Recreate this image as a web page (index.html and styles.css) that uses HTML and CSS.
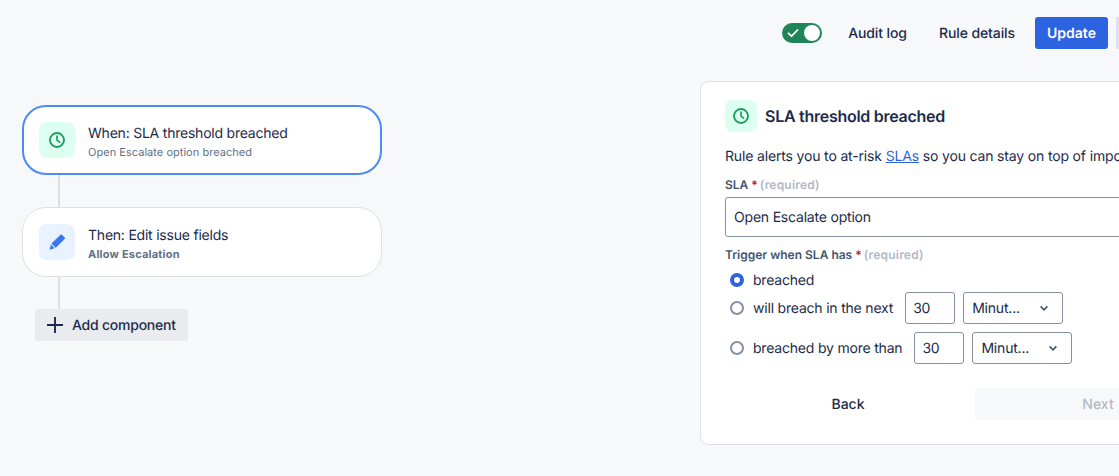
FILE: index.html
```html
<!DOCTYPE html>
<html lang="en">
<head>
<meta charset="utf-8">
<title>SLA threshold breached</title>
<link rel="stylesheet" href="styles.css">
</head>
<body>
<div class="page">
  <header class="topbar">
    <span class="toggle">
      <svg class="toggle-check" width="14" height="14" viewBox="0 0 14 14"><path d="M2.5 7.3 5.6 10.2 11.5 4" fill="none" stroke="#fff" stroke-width="1.8" stroke-linecap="round" stroke-linejoin="round"/></svg>
      <span class="toggle-knob"></span>
    </span>
    <a class="top-link link-audit">Audit log</a>
    <a class="top-link link-details">Rule details</a>
    <button class="btn-update">Update</button>
    <span class="top-sep"></span>
  </header>
  <main class="main">
    <section class="flow">
      <div class="node node-active">
        <span class="icon-box icon-green">
          <svg width="18" height="18" viewBox="0 0 18 18"><circle cx="9" cy="9" r="7" fill="none" stroke="#1f9d63" stroke-width="1.9"/><path d="M9 5v4.2l2.6 2" fill="none" stroke="#1f9d63" stroke-width="1.7" stroke-linecap="round" stroke-linejoin="round"/></svg>
        </span>
        <div class="node-text">
          <div class="node-title">When: SLA threshold breached</div>
          <div class="node-sub">Open Escalate option breached</div>
        </div>
      </div>
      <div class="connector"></div>
      <div class="node">
        <span class="icon-box icon-blue">
          <svg width="18" height="18" viewBox="0 0 18 18"><path d="M13.2 1.6 17 5.2 7.8 14.4 3.8 10.6Z" fill="#3b76f0" stroke="#3b76f0" stroke-width="0.8" stroke-linejoin="round"/><path d="M2.9 11.6 6.6 15.2 1.6 16.8Z" fill="#3b76f0"/></svg>
        </span>
        <div class="node-text">
          <div class="node-title">Then: Edit issue fields</div>
          <div class="node-sub node-sub-bold">Allow Escalation</div>
        </div>
      </div>
      <div class="connector"></div>
      <button class="btn-add">
        <svg width="18" height="18" viewBox="0 0 18 18"><path d="M9 1v16M1 9h16" stroke="#1c2b4a" stroke-width="1.9" fill="none"/></svg>
        <span>Add component</span>
      </button>
    </section>
    <section class="panel">
      <div class="panel-head">
        <span class="icon-box icon-green icon-small">
          <svg width="18" height="18" viewBox="0 0 18 18"><circle cx="9" cy="9" r="7" fill="none" stroke="#1f9d63" stroke-width="1.9"/><path d="M9 5v4.2l2.6 2" fill="none" stroke="#1f9d63" stroke-width="1.7" stroke-linecap="round" stroke-linejoin="round"/></svg>
        </span>
        <h2 class="panel-title">SLA threshold breached</h2>
      </div>
      <p class="panel-desc">Rule alerts you to at-risk <a class="desc-link">SLAs</a> so you can stay on top of important issues and escalate them.</p>
      <div class="field-label">SLA<span class="req">*</span> <span class="req-note">(required)</span></div>
      <div class="text-input">Open Escalate option</div>
      <div class="field-label label-trigger">Trigger when SLA has<span class="req">*</span> <span class="req-note">(required)</span></div>
      <div class="radio-row row-first">
        <span class="radio radio-on"></span>
        <span class="radio-label">breached</span>
      </div>
      <div class="radio-row row-second">
        <span class="radio"></span>
        <span class="radio-label">will breach in the next</span>
        <span class="num-input">30</span>
        <span class="select">Minut...<svg width="10" height="10" viewBox="0 0 10 10"><path d="M1.6 3.4 5 6.8 8.4 3.4" fill="none" stroke="#44516b" stroke-width="1.6"/></svg></span>
      </div>
      <div class="radio-row row-third">
        <span class="radio"></span>
        <span class="radio-label">breached by more than</span>
        <span class="num-input">30</span>
        <span class="select">Minut...<svg width="10" height="10" viewBox="0 0 10 10"><path d="M1.6 3.4 5 6.8 8.4 3.4" fill="none" stroke="#44516b" stroke-width="1.6"/></svg></span>
      </div>
      <div class="panel-actions">
        <button class="btn-back">Back</button>
        <button class="btn-next">Next</button>
      </div>
    </section>
  </main>
</div>
</body>
</html>
```
FILE: styles.css
```css
* { box-sizing: border-box; }
html, body { margin: 0; height: 100%; overflow: hidden; }
body {
  background: #f7f8fa;
  font-family: Inter, "Liberation Sans", sans-serif;
  color: #1c2b4a;
  font-size: 14px;
  letter-spacing: -0.2px;
  text-rendering: geometricPrecision;
}
.page { width: 1119px; height: 476px; overflow: hidden; }

.topbar {
  height: 81px;
  padding-top: 17px;
  display: flex;
  align-items: flex-start;
  justify-content: flex-end;
}
.toggle {
  width: 40px;
  height: 20px;
  margin-top: 6px;
  margin-right: 26px;
  padding: 2px;
  border-radius: 10px;
  background: #1f845a;
  display: flex;
  align-items: center;
  justify-content: space-between;
}
.toggle-check { margin-left: 2px; }
.toggle-knob { width: 16px; height: 16px; border-radius: 50%; background: #fff; }
.top-link { line-height: 33px; font-weight: 500; font-size: 14px; letter-spacing: -0.1px; }
.link-audit { margin-right: 32px; }
.link-details { margin-right: 20px; }
.btn-update {
  width: 73px;
  height: 32px;
  padding: 1px 0 0;
  border: 0;
  border-radius: 3px;
  background: #2d62e0;
  color: #fff;
  font: 600 14px Inter, "Liberation Sans", sans-serif;
  text-rendering: geometricPrecision;
  margin-right: 8px;
}
.top-sep { width: 3px; height: 32px; background: #dfe1e6; }

.main { display: flex; align-items: flex-start; }
.flow {
  flex: none;
  width: 700px;
  padding: 24px 0 0 22px;
  display: flex;
  flex-direction: column;
  align-items: flex-start;
}
.node {
  width: 360px;
  height: 70px;
  padding: 0 16px;
  background: #fff;
  border: 1px solid #dfe1e6;
  border-radius: 24px;
  display: flex;
  align-items: center;
  gap: 13px;
}
.node-active { border: 2px solid #4c8bf5; padding: 0 15px; }
.icon-box {
  width: 36px;
  height: 36px;
  border-radius: 8px;
  display: flex;
  align-items: center;
  justify-content: center;
  flex: none;
}
.icon-small { width: 32px; height: 32px; }
.icon-green { background: #dcfff1; }
.icon-blue { background: #e9f2ff; }
.node-text { padding-top: 3px; }
.node-title { font-size: 14px; line-height: 20px; letter-spacing: -0.22px; }
.node-sub { font-size: 11px; line-height: 16px; color: #626f86; letter-spacing: 0.03px; }
.node-sub-bold { font-weight: 700; letter-spacing: 0.2px; }
.connector { width: 2px; height: 32px; margin-left: 36px; background: #dcdfe4; }
.btn-add {
  margin-left: 13px;
  width: 153px;
  height: 32px;
  padding: 0 0 0 11px;
  border: 0;
  border-radius: 3px;
  background: #e9ebee;
  color: #1c2b4a;
  font: 500 14px Inter, "Liberation Sans", sans-serif;
  letter-spacing: -0.23px;
  text-rendering: geometricPrecision;
  display: flex;
  align-items: center;
  gap: 8px;
}

.panel {
  flex: none;
  width: 600px;
  height: 364px;
  padding: 18px 24px 0;
  background: #fff;
  border: 1px solid #dfe1e6;
  border-radius: 8px;
}
.panel-head { display: flex; align-items: center; gap: 8px; }
.panel-title { margin: 0; font-size: 16px; line-height: 32px; font-weight: 600; letter-spacing: -0.27px; }
.panel-desc { margin: 15px 0 0; line-height: 20px; white-space: nowrap; font-size: 14px; letter-spacing: -0.16px; }
.desc-link { color: #2d62e0; text-decoration: underline; }
.field-label { margin-top: 10px; font-size: 12px; line-height: 16px; font-weight: 600; color: #44546f; letter-spacing: 0; }
.label-trigger { margin-top: 10px; }
.req { color: #ae2e24; margin-left: 3px; }
.req-note { color: #b3b9c4; margin-left: -1px; letter-spacing: 0.2px; }
.text-input {
  margin-top: 4px;
  height: 40px;
  padding: 0 8px;
  border: 1px solid #8590a2;
  border-radius: 3px;
  line-height: 39px;
}
.radio-row { display: flex; align-items: center; padding-left: 5px; }
.row-first { margin-top: 5px; height: 24px; }
.row-second { margin-top: 0; height: 32px; }
.row-third { margin-top: 8px; height: 32px; }
.radio {
  width: 14px;
  height: 14px;
  border-radius: 50%;
  border: 2px solid #8590a2;
  margin-right: 9px;
  flex: none;
}
.radio-on { border: 4.5px solid #2d62e0; background: #fff; }
.radio-label { margin-right: 12px; white-space: nowrap; }
.num-input {
  width: 50px;
  height: 32px;
  margin-right: 8px;
  padding-left: 7px;
  border: 1px solid #8590a2;
  border-radius: 3px;
  line-height: 32px;
}
.select {
  width: 100px;
  height: 32px;
  padding: 0 13px 0 8px;
  border: 1px solid #8590a2;
  border-radius: 3px;
  display: flex;
  align-items: center;
  justify-content: space-between;
}
.panel-actions { display: flex; margin-top: 24px; gap: 0; }
.btn-back {
  width: 250px;
  height: 32px;
  padding: 0 4px 0 0;
  border: 0;
  background: transparent;
  color: #1c2b4a;
  font: 500 14px Inter, "Liberation Sans", sans-serif;
  text-rendering: geometricPrecision;
}
.btn-next {
  flex: none;
  width: 246px;
  height: 32px;
  border: 0;
  border-radius: 3px;
  background: #f7f8f9;
  color: #b3b9c4;
  font: 500 14px Inter, "Liberation Sans", sans-serif;
  text-rendering: geometricPrecision;
}
```
